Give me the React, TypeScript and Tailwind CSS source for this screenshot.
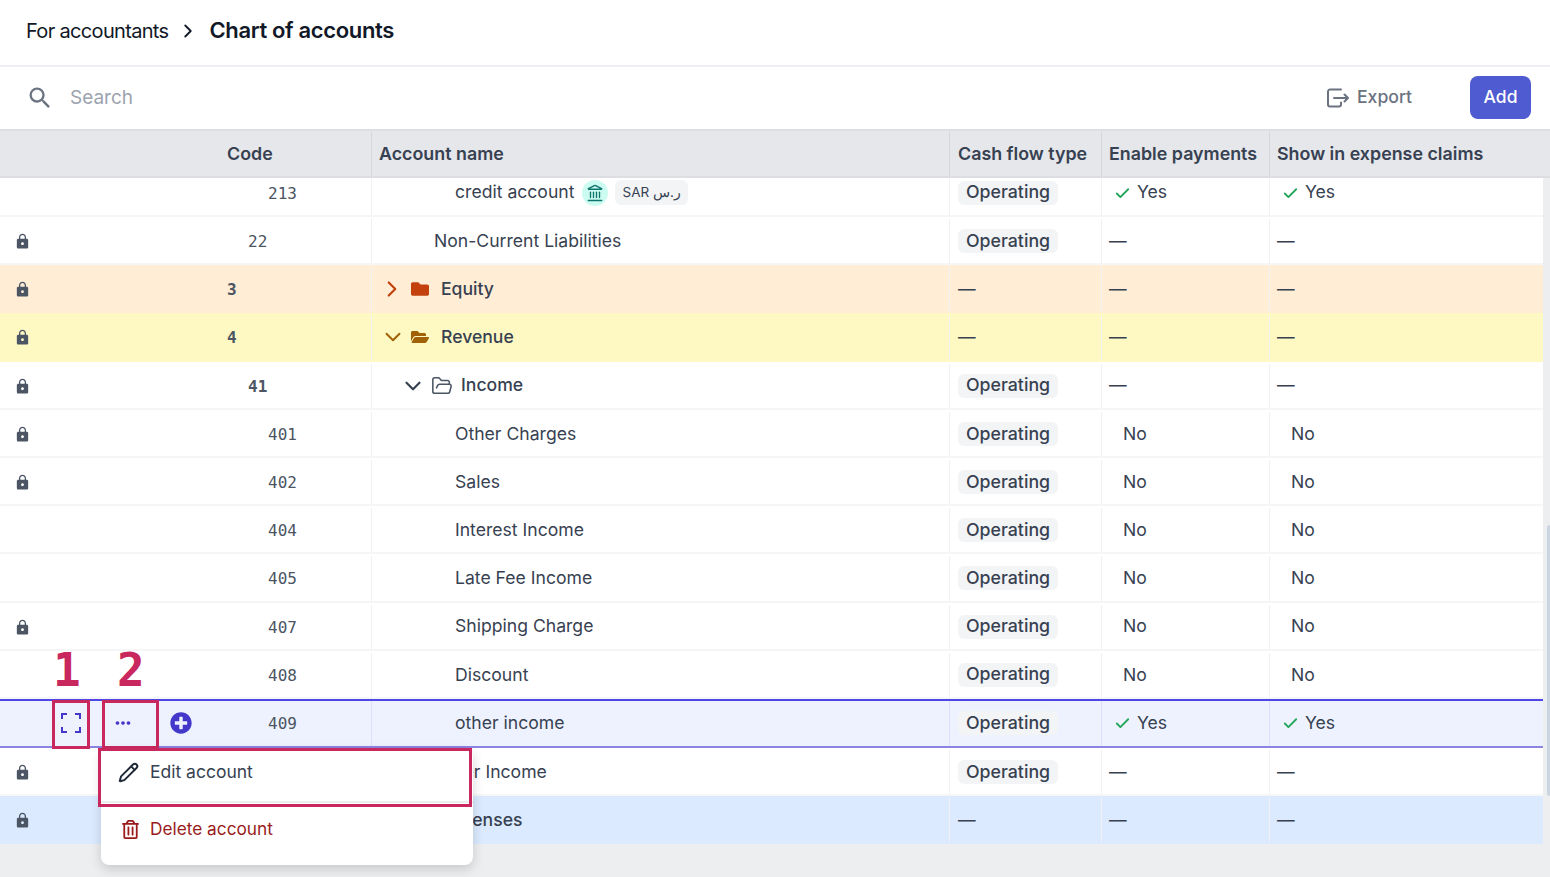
import React from 'react';
import { Check, ChevronDown, ChevronRight, FolderOpen, Landmark, Pencil } from 'lucide-react';
import { FaFolder, FaFolderOpen, FaPlusCircle, FaRegTrashAlt } from 'react-icons/fa';
import { MdLock, MdMoreHoriz, MdSearch } from 'react-icons/md';

type Row = {
  code: string;
  name: string;
  locked?: boolean;
  codeClass: string;
  nameClass: string;
  bold?: boolean;
  bg?: string;
  folder?: 'closed' | 'open' | 'outline';
  cash?: boolean;
  pay: 'dash' | 'no' | 'yes';
};

const rows: Row[] = [
  { code: '22', name: 'Non-Current Liabilities', locked: true, codeClass: 'ml-[218px]', nameClass: 'pl-[62px]', cash: true, pay: 'dash' },
  { code: '3', name: 'Equity', locked: true, codeClass: 'ml-[197px]', nameClass: 'pl-[7px]', bold: true, bg: 'bg-[#ffedd5]', folder: 'closed', pay: 'dash' },
  { code: '4', name: 'Revenue', locked: true, codeClass: 'ml-[197px]', nameClass: 'pl-[8px]', bold: true, bg: 'bg-[#fef9c3]', folder: 'open', pay: 'dash' },
  { code: '41', name: 'Income', locked: true, codeClass: 'ml-[218px]', nameClass: 'pl-[28px]', bold: true, folder: 'outline', cash: true, pay: 'dash' },
  { code: '401', name: 'Other Charges', locked: true, codeClass: 'ml-[238px]', nameClass: 'pl-[83px]', cash: true, pay: 'no' },
  { code: '402', name: 'Sales', locked: true, codeClass: 'ml-[238px]', nameClass: 'pl-[83px]', cash: true, pay: 'no' },
  { code: '404', name: 'Interest Income', codeClass: 'ml-[238px]', nameClass: 'pl-[83px]', cash: true, pay: 'no' },
  { code: '405', name: 'Late Fee Income', codeClass: 'ml-[238px]', nameClass: 'pl-[83px]', cash: true, pay: 'no' },
  { code: '407', name: 'Shipping Charge', locked: true, codeClass: 'ml-[238px]', nameClass: 'pl-[83px]', cash: true, pay: 'no' },
  { code: '408', name: 'Discount', codeClass: 'ml-[238px]', nameClass: 'pl-[83px]', cash: true, pay: 'no' },
];

const columns = 'grid grid-cols-[372px_578px_152px_168px_1fr]';
const codeFont = "font-['DejaVu_Sans_Mono',monospace] text-[16px]";

const Pill = () => (
  <span className="inline-flex h-[24px] w-[100px] items-center rounded-md bg-[#f3f4f6] pl-2 text-[17.75px] font-medium text-[#374151]">Operating</span>
);

const Dash = () => <span className="text-[#374151]">—</span>;

const Yes = () => (
  <span className="flex items-center text-[#374151]">
    <Check size={17} strokeWidth={2.6} className="ml-[5px] mr-[6px] mt-[2px] text-[#22a55b]" />
    Yes
  </span>
);

const Flag = ({ pay }: { pay: Row['pay'] }) => {
  if (pay === 'yes') return <Yes />;
  if (pay === 'no') return <span className="pl-[14px] text-[#374151]">No</span>;
  return <Dash />;
};

const FolderCell = ({ kind }: { kind: NonNullable<Row['folder']> }) => {
  if (kind === 'closed') {
    return (
      <>
        <ChevronRight size={26} strokeWidth={2} className="text-[#c2410c]" />
        <FaFolder size={18} className="ml-[6px] mr-[12px] text-[#c2410c]" />
      </>
    );
  }
  if (kind === 'open') {
    return (
      <>
        <ChevronDown size={26} strokeWidth={1.8} className="mr-[5px] text-[#a16207]" />
        <FaFolderOpen size={18} className="mr-[12px] text-[#a16207]" />
      </>
    );
  }
  return (
    <>
      <ChevronDown size={26} strokeWidth={2} className="mr-[5px] text-[#374151]" />
      <FolderOpen size={22} strokeWidth={1.7} className="mr-[8px] text-[#4b5563]" />
    </>
  );
};

const cell = 'flex items-center border-r border-[#f0f1f5]';

const TableRow = ({ row }: { row: Row }) => (
  <div className={`${columns} h-[48.2px] border-b-2 pt-[2px] text-[17.6px] ${row.bg ? `${row.bg} border-transparent` : 'border-[#f5f6f7] bg-white'}`}>
    <div className={`${cell} pl-[15px]`}>
      <span className="mt-[1px] w-[15px]">{row.locked && <MdLock size={17} className="-ml-[1px] text-[#4b5563]" />}</span>
      {row.code && <span className={`${row.codeClass} ${codeFont} mt-[2px] text-[#4b5563] ${row.bold ? 'font-bold' : ''}`}>{row.code}</span>}
    </div>
    <div className={`${cell} ${row.nameClass} ${row.folder ? 'font-medium' : ''} text-[#374151]`}>
      {row.folder && <FolderCell kind={row.folder} />}
      {row.name}
    </div>
    <div className={`${cell} pl-2`}>{row.cash ? <Pill /> : <Dash />}</div>
    <div className={`${cell} pl-[7px]`}><Flag pay={row.pay} /></div>
    <div className="flex items-center pl-[7px]"><Flag pay={row.pay} /></div>
  </div>
);

const ExportIcon = () => (
  <svg width="24" height="22" viewBox="0 0 24 22" fill="none" stroke="#6b7280" strokeWidth="2" strokeLinecap="round" strokeLinejoin="round">
    <path d="M15 2.5H4a2 2 0 0 0-2 2v13a2 2 0 0 0 2 2h9a2 2 0 0 0 2-2v-2" />
    <path d="M8 11h14M18.5 7.5 22 11l-3.5 3.5" />
  </svg>
);

const ExpandIcon = () => (
  <svg width="22" height="22" viewBox="0 0 22 22" fill="none" stroke="#4338ca" strokeWidth="2">
    <path d="M2 7V2h5M15 2h5v5M20 15v5h-5M7 20H2v-5" />
  </svg>
);

export default function App() {
  return (
    <div className="relative h-[877px] w-[1550px] overflow-hidden bg-[#edeef0] font-['Inter',sans-serif]">
      <header className="flex h-[67px] items-center border-b-2 border-[#eeeef5] bg-white pb-[4px] pl-[26px]">
        <span className="text-[20px] tracking-[-0.67px] text-[#111827]">For accountants</span>
        <ChevronRight size={22} strokeWidth={2} className="ml-[9px] text-[#111827]" />
        <span className="ml-[10px] text-[22px] font-semibold tracking-[-0.35px] text-[#111827]">Chart of accounts</span>
      </header>

      <div className="flex h-[62px] items-center bg-white pl-[26px] pr-[19px]">
        <MdSearch size={28} className="text-[#6b7280]" />
        <span className="ml-[16px] flex-1 text-[19px] text-[#9ca3af]">Search</span>
        <ExportIcon />
        <span className="mb-[2px] ml-[7px] mr-[58px] text-[17.6px] font-medium text-[#6b7280]">Export</span>
        <button className="mb-[2px] h-[43px] w-[61px] rounded-lg bg-[#4f5bd0] text-[17.5px] font-medium text-white">Add</button>
      </div>

      <div className={`${columns} h-[49px] border-y-2 border-[#dcdee2] bg-[#e5e7eb] pt-[1px] text-[17.85px] font-semibold text-[#374151]`}>
        <div className="flex items-center border-r border-[#d5d7dc] pl-[227px]">Code</div>
        <div className="flex items-center border-r border-[#d5d7dc] pl-[7px]">Account name</div>
        <div className="flex items-center border-r border-[#d5d7dc] pl-2">Cash flow type</div>
        <div className="flex items-center border-r border-[#d5d7dc] pl-[7px]">Enable payments</div>
        <div className="flex items-center pl-[7px]">Show in expense claims</div>
      </div>

      <div className="flex">
        <div className="w-[1543px]">
          <div className={`${columns} h-[39px] border-b-2 border-[#f5f6f7] bg-white text-[17.6px]`}>
            <div className={`${cell} pb-[6px] pl-[268px] ${codeFont} text-[#4b5563]`}>213</div>
            <div className={`${cell} pb-[8px] pl-[83px] text-[#374151]`}>
              credit account
              <span className="ml-[8px] flex h-[26px] w-[26px] items-center justify-center rounded-full bg-[#ccfbf1]">
                <Landmark size={18} strokeWidth={1.8} className="text-[#0f766e]" />
              </span>
              <span className="ml-[7px] flex h-[25px] items-center rounded-md bg-[#f3f4f6] px-[7px] text-[13.5px] text-[#374151]">SAR ر.س</span>
            </div>
            <div className={`${cell} pb-[8px] pl-2`}><Pill /></div>
            <div className={`${cell} pb-[8px] pl-[7px]`}><Yes /></div>
            <div className="flex items-center pb-[8px] pl-[7px]"><Yes /></div>
          </div>

          {rows.map((row) => (
            <TableRow key={row.code} row={row} />
          ))}

          <div className={`${columns} h-[49px] border-y-2 border-t-[#4f46e5] border-b-[#8b83e0] bg-[#eef2ff] text-[17.6px]`}>
            <div className="flex items-center border-r border-[#dbe0fb] pl-[60px]">
              <ExpandIcon />
              <MdMoreHoriz size={22} className="ml-[30px] text-[#4338ca]" />
              <FaPlusCircle size={22} className="ml-[36px] text-[#4338ca]" />
              <span className={`ml-[76px] mt-[1px] ${codeFont} text-[#4b5563]`}>409</span>
            </div>
            <div className="flex items-center border-r border-[#dbe0fb] pb-[1px] pl-[83px] text-[#374151]">other income</div>
            <div className="flex items-center border-r border-[#dbe0fb] pb-[1px] pl-2"><Pill /></div>
            <div className="flex items-center border-r border-[#dbe0fb] pb-[1px] pl-[7px]"><Yes /></div>
            <div className="flex items-center pb-[1px] pl-[7px]"><Yes /></div>
          </div>

          <TableRow row={{ code: '', name: 'Other Income', locked: true, codeClass: '', nameClass: 'pl-[62px]', cash: true, pay: 'dash' }} />
          <TableRow row={{ code: '', name: 'Expenses', locked: true, codeClass: '', nameClass: 'pl-[7px]', bold: true, bg: 'bg-[#dbeafe]', folder: 'closed', pay: 'dash' }} />
        </div>
        <div className="h-[666px] w-[7px] bg-[#eceef0] pl-[4px]">
          <div className="mt-[347px] h-[271px] w-[3px] rounded-l bg-[#cbd5e1]" />
        </div>
      </div>

      {/* annotations and the open row menu lie over the table */}
      <span className="absolute left-[53px] top-[640px] font-['DejaVu_Sans_Mono',monospace] text-[46px] font-bold leading-[60px] text-[#c9285f]">1</span>
      <span className="absolute left-[117px] top-[640px] font-['DejaVu_Sans_Mono',monospace] text-[46px] font-bold leading-[60px] text-[#c9285f]">2</span>
      <div className="absolute left-[52px] top-[700px] h-[49px] w-[38px] border-[3px] border-[#c9285f]" />
      <div className="absolute left-[102px] top-[700px] h-[49px] w-[57px] border-[3px] border-[#c9285f]" />

      <div className="absolute left-[101px] top-[748px] h-[117px] w-[372px] rounded-lg bg-white text-[17.5px] shadow-[0_4px_12px_rgba(0,0,0,0.16)]">
        <div className="flex h-[55px] items-center border-b-2 border-[#eceef0] pb-[4px] pl-[17px] text-[#374151]">
          <Pencil size={21} strokeWidth={2.2} className="mr-[11px] text-[#1f2937]" />
          Edit account
        </div>
        <div className="flex h-[52px] items-center pl-[20px] text-[17.25px] text-[#991b1b]">
          <FaRegTrashAlt size={19} className="mr-[10px]" />
          Delete account
        </div>
      </div>
      <div className="absolute left-[98px] top-[748px] h-[59px] w-[374px] border-[3px] border-[#c9285f]" />
    </div>
  );
}
